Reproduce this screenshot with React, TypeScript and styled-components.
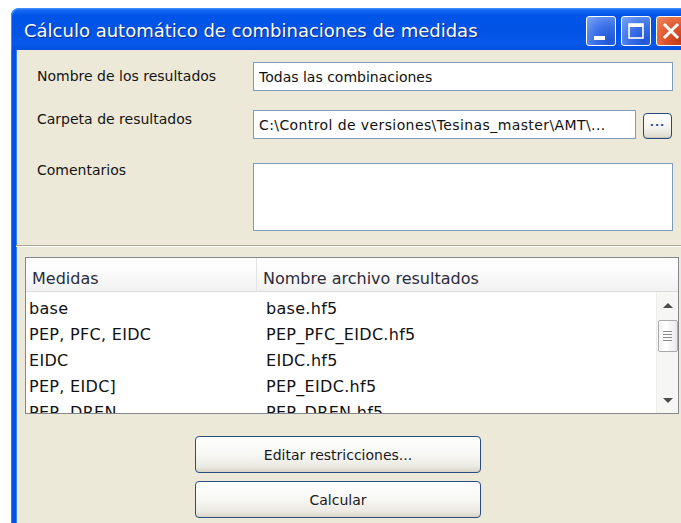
import React from "react";
import styled, { createGlobalStyle } from "styled-components";

const FONT = `"DejaVu Sans", "Noto Sans", sans-serif`;

const GlobalStyle = createGlobalStyle`
  html, body {
    margin: 0;
    padding: 0;
    background: #ffffff;
    overflow: hidden;
  }
  body {
    font-family: ${FONT};
  }
`;

const Window = styled.div`
  margin: 8px 0 0 11px;
  width: 682px;
  display: flex;
  flex-direction: column;
`;

const TitleBar = styled.div`
  height: 42px;
  box-sizing: border-box;
  border-radius: 8px 8px 0 0;
  background: linear-gradient(
    180deg,
    #4a9bff 0%,
    #1466f4 5%,
    #0055e8 18%,
    #0053e4 55%,
    #0759ec 85%,
    #0050dc 100%
  );
  box-shadow: inset 1px 1px 0 #3f8cf8;
  display: flex;
  align-items: flex-start;
  padding: 8px 7px 0 13px;
`;

const Title = styled.div`
  flex: 1;
  color: #ffffff;
  font-family: ${FONT};
  font-size: 18px;
  line-height: 30px;
  text-shadow: 1px 1px 0 #0a2a8c;
  white-space: nowrap;
  overflow: hidden;
`;

const Controls = styled.div`
  display: flex;
  gap: 5px;
`;

const CtrlButton = styled.div<{ $close?: boolean }>`
  width: 30px;
  height: 30px;
  box-sizing: border-box;
  border: 1px solid #ffffff;
  border-radius: 3px;
  background: ${(p) =>
    p.$close
      ? "radial-gradient(circle at 80% 85%, #c43c16 0%, #e0552c 45%, #f08a62 100%)"
      : "radial-gradient(circle at 80% 85%, #1f54d6 0%, #3a6fe6 45%, #7aa6f8 100%)"};
  display: flex;
  align-items: center;
  justify-content: center;
  svg {
    display: block;
  }
`;

const Frame = styled.div`
  background: #0053e4;
  padding: 0 5px;
  box-shadow: inset 1px 0 0 #2f78f2;
`;

const Client = styled.div`
  background: #ece9d8;
  height: 480px;
  box-shadow: inset 1px 0 0 #3a7ff2;
  display: flex;
  flex-direction: column;
`;

const Form = styled.div`
  display: flex;
  flex-direction: column;
  padding: 0 15px 0 21px;
`;

const FormRow = styled.div<{ $top: number }>`
  display: flex;
  align-items: flex-start;
  margin-top: ${(p) => p.$top}px;
`;

const FieldLabel = styled.div<{ $offset: number }>`
  width: 216px;
  flex: none;
  margin-top: ${(p) => p.$offset}px;
  font-family: ${FONT};
  font-size: 14px;
  line-height: 18px;
  color: #141414;
  white-space: nowrap;
`;

const TextInput = styled.input<{ $width: number; $tracking?: number }>`
  width: ${(p) => p.$width}px;
  height: 29px;
  box-sizing: border-box;
  border: 1px solid #7f9db9;
  background: #ffffff;
  padding: 0 5px;
  margin: 0;
  font-family: ${FONT};
  font-size: 14px;
  letter-spacing: ${(p) => p.$tracking ?? 0}px;
  color: #111111;
  outline: none;
`;

const FieldGroup = styled.div`
  display: flex;
  align-items: flex-start;
  gap: 7px;
`;

const BrowseButton = styled.div`
  width: 29px;
  height: 26px;
  margin-top: 3px;
  box-sizing: border-box;
  border: 1px solid #27497e;
  border-radius: 4px;
  background: linear-gradient(180deg, #ffffff 0%, #f4f3ee 55%, #dcd8cc 100%);
  box-shadow: inset 0 -1px 0 #c9c4b6;
  display: flex;
  align-items: center;
  justify-content: center;
  font-family: ${FONT};
  font-size: 11px;
  font-weight: bold;
  color: #2b4f91;
  letter-spacing: 1px;
  padding-bottom: 2px;
`;

const CommentBox = styled.textarea`
  width: 421px;
  height: 68px;
  box-sizing: border-box;
  border: 1px solid #7f9db9;
  background: #ffffff;
  margin: 0;
  padding: 3px 5px;
  resize: none;
  outline: none;
  font-family: ${FONT};
  font-size: 14px;
`;

const Separator = styled.div`
  margin-top: 14px;
  height: 0;
  border-top: 1px solid #aca899;
  border-bottom: 1px solid #ffffff;
`;

const TableFrame = styled.div`
  margin: 10px 9px 0 9px;
  height: 157px;
  box-sizing: border-box;
  border: 1px solid #828790;
  background: #ffffff;
  display: flex;
  flex-direction: column;
`;

const HeaderRow = styled.div`
  height: 34px;
  flex: none;
  box-sizing: border-box;
  display: flex;
  background: linear-gradient(180deg, #ffffff 0%, #fbfbfb 45%, #f1f1f1 100%);
  border-bottom: 1px solid #dcdcdc;
`;

const HeaderCell = styled.div<{ $width?: number }>`
  ${(p) => (p.$width ? `width: ${p.$width}px; flex: none;` : "flex: 1;")}
  box-sizing: border-box;
  padding: 9px 0 0 6px;
  line-height: 24px;
  font-family: ${FONT};
  font-size: 16px;
  color: #2c2c3a;
  white-space: nowrap;
  border-right: ${(p) => (p.$width ? "1px solid #e3e3e3" : "none")};
`;

const Body = styled.div`
  flex: 1;
  display: flex;
  min-height: 0;
`;

const Rows = styled.div`
  flex: 1;
  padding-top: 4px;
  overflow: hidden;
`;

const Row = styled.div`
  display: flex;
  height: 26px;
`;

const Cell = styled.div<{ $width?: number }>`
  ${(p) => (p.$width ? `width: ${p.$width}px; flex: none;` : "flex: 1;")}
  box-sizing: border-box;
  padding-left: 3px;
  line-height: 26px;
  font-family: ${FONT};
  font-size: 16px;
  letter-spacing: 0.3px;
  color: #111111;
  white-space: nowrap;
`;

const ScrollBar = styled.div`
  width: 22px;
  flex: none;
  box-sizing: border-box;
  background: #f6f6f3;
  border-left: 1px solid #ececec;
  display: flex;
  flex-direction: column;
  align-items: center;
  padding: 11px 0 10px;
`;

const ArrowUp = styled.div`
  width: 0;
  height: 0;
  border-left: 5px solid transparent;
  border-right: 5px solid transparent;
  border-bottom: 5px solid #4d4d4d;
`;

const ArrowDown = styled.div`
  width: 0;
  height: 0;
  margin-top: auto;
  border-left: 5px solid transparent;
  border-right: 5px solid transparent;
  border-top: 5px solid #4d4d4d;
`;

const Thumb = styled.div`
  margin-top: 12px;
  width: 20px;
  height: 32px;
  box-sizing: border-box;
  border: 1px solid #a9a9a9;
  border-radius: 2px;
  background: linear-gradient(90deg, #f4f4f4 0%, #ffffff 40%, #e9e9e9 100%);
  display: flex;
  align-items: center;
  justify-content: center;
`;

const Grip = styled.div`
  width: 9px;
  height: 11px;
  background: repeating-linear-gradient(
    180deg,
    #8a8a8a 0px,
    #8a8a8a 1px,
    transparent 1px,
    transparent 3px
  );
`;

const Actions = styled.div`
  display: flex;
  flex-direction: column;
  gap: 8px;
  margin-top: 22px;
  padding-left: 179px;
`;

const PushButton = styled.div`
  width: 286px;
  height: 37px;
  box-sizing: border-box;
  border: 1px solid #2a4d80;
  border-radius: 4px;
  background: linear-gradient(180deg, #ffffff 0%, #f7f7f4 50%, #ebe9e2 85%, #d8d3c6 100%);
  display: flex;
  align-items: center;
  justify-content: center;
  font-family: ${FONT};
  font-size: 14px;
  color: #1a1a1a;
`;

const combos: [string, string][] = [
  ["base", "base.hf5"],
  ["PEP, PFC, EIDC", "PEP_PFC_EIDC.hf5"],
  ["EIDC", "EIDC.hf5"],
  ["PEP, EIDC]", "PEP_EIDC.hf5"],
  ["PEP, DREN", "PEP_DREN.hf5"],
];

export default function App() {
  return (
    <>
      <GlobalStyle />
      <Window>
        <TitleBar>
          <Title>Cálculo automático de combinaciones de medidas</Title>
          <Controls>
            <CtrlButton>
              <svg width="28" height="28" viewBox="0 0 28 28">
                <rect x="7" y="19" width="11" height="4" fill="#fff" />
              </svg>
            </CtrlButton>
            <CtrlButton>
              <svg width="28" height="28" viewBox="0 0 28 28">
                <rect x="7" y="7" width="14" height="14" fill="none" stroke="#fff" strokeWidth="1.6" />
                <rect x="7" y="7" width="14" height="3" fill="#fff" />
              </svg>
            </CtrlButton>
            <CtrlButton $close>
              <svg width="28" height="28" viewBox="0 0 28 28">
                <path d="M8 8 L20 20 M20 8 L8 20" stroke="#fff" strokeWidth="3" strokeLinecap="square" />
              </svg>
            </CtrlButton>
          </Controls>
        </TitleBar>
        <Frame>
          <Client>
            <Form>
              <FormRow $top={12}>
                <FieldLabel $offset={5}>Nombre de los resultados</FieldLabel>
                <TextInput $width={420} readOnly defaultValue="Todas las combinaciones" />
              </FormRow>
              <FormRow $top={19}>
                <FieldLabel $offset={0}>Carpeta de resultados</FieldLabel>
                <FieldGroup>
                  <TextInput
                    $width={383}
                    $tracking={0.4}
                    readOnly
                    defaultValue={"C:\\Control de versiones\\Tesinas_master\\AMT\\..."}
                  />
                  <BrowseButton>···</BrowseButton>
                </FieldGroup>
              </FormRow>
              <FormRow $top={24}>
                <FieldLabel $offset={-2}>Comentarios</FieldLabel>
                <CommentBox readOnly defaultValue="" />
              </FormRow>
            </Form>
            <Separator />
            <TableFrame>
              <HeaderRow>
                <HeaderCell $width={231}>Medidas</HeaderCell>
                <HeaderCell>Nombre archivo resultados</HeaderCell>
              </HeaderRow>
              <Body>
                <Rows>
                  {combos.map(([m, f]) => (
                    <Row key={f}>
                      <Cell $width={237}>{m}</Cell>
                      <Cell>{f}</Cell>
                    </Row>
                  ))}
                </Rows>
                <ScrollBar>
                  <ArrowUp />
                  <Thumb>
                    <Grip />
                  </Thumb>
                  <ArrowDown />
                </ScrollBar>
              </Body>
            </TableFrame>
            <Actions>
              <PushButton>Editar restricciones...</PushButton>
              <PushButton>Calcular</PushButton>
            </Actions>
          </Client>
        </Frame>
      </Window>
    </>
  );
}
